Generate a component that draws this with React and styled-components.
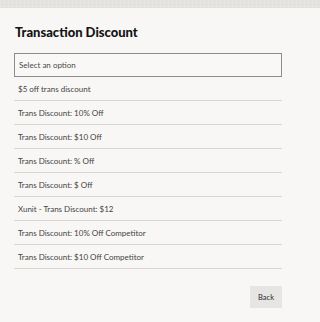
import React, { useState } from 'react';
import styled, { createGlobalStyle } from 'styled-components';

const GlobalStyle = createGlobalStyle`
  html, body {
    margin: 0;
    padding: 0;
    background: #f8f7f5;
    font-family: Lato, "Noto Sans", sans-serif;
  }
`;

const Page = styled.div`
  width: 100%;
  height: 322px;
  display: flex;
  flex-direction: column;
  background: #f8f7f5;
`;

// mottled strip along the top edge
const TopBand = styled.div`
  height: 8px;
  background:
    repeating-linear-gradient(90deg, rgba(255,255,255,0.18) 0 1px, transparent 1px 4px),
    repeating-linear-gradient(0deg, rgba(0,0,0,0.02) 0 1px, transparent 1px 3px),
    #e5e3e0;
`;

const Panel = styled.div`
  width: 268px;
  display: flex;
  flex-direction: column;
  padding: 15px 0 0 14px;
`;

const Title = styled.h1`
  margin: 0 0 0 1px;
  font-family: Lato, sans-serif;
  font-size: 13px;
  font-weight: 900;
  color: #141414;
  line-height: 18px;
`;

const SelectBox = styled.div`
  margin-top: 12px;
  height: 22px;
  border: 1px solid #8e8c8a;
  background: #f9f8f6;
  display: flex;
  align-items: center;
  padding-left: 4px;
  font-size: 8px;
  color: #4a4a4a;
`;

const List = styled.ul`
  list-style: none;
  margin: 0;
  padding: 0;
`;

const Row = styled.li`
  height: 23px;
  border-bottom: 1px solid #d6d5d3;
  display: flex;
  align-items: center;
  padding-left: 4px;
  font-size: 8px;
  color: ${({ $active }) => ($active ? '#111' : '#444')};
  cursor: pointer;
`;

const Footer = styled.div`
  display: flex;
  justify-content: flex-end;
  margin-top: 17px;
`;

const BackButton = styled.button`
  width: 32px;
  height: 22px;
  border: none;
  border-radius: 1px;
  background: #e6e5e3;
  font-family: Lato, sans-serif;
  font-size: 7.5px;
  color: #2a2a2a;
  padding: 0;
  cursor: pointer;
`;

const options = [
  '$5 off trans discount',
  'Trans Discount: 10% Off',
  'Trans Discount: $10 Off',
  'Trans Discount: % Off',
  'Trans Discount: $ Off',
  'Xunit - Trans Discount: $12',
  'Trans Discount: 10% Off Competitor',
  'Trans Discount: $10 Off Competitor',
];

export default function App() {
  const [selected, setSelected] = useState(null);

  return (
    <>
      <GlobalStyle />
      <Page>
        <TopBand />
        <Panel>
          <Title>Transaction Discount</Title>
          <SelectBox>{selected || 'Select an option'}</SelectBox>
          <List>
            {options.map((opt) => (
              <Row key={opt} $active={selected === opt} onClick={() => setSelected(opt)}>
                {opt}
              </Row>
            ))}
          </List>
          <Footer>
            <BackButton>Back</BackButton>
          </Footer>
        </Panel>
      </Page>
    </>
  );
}
